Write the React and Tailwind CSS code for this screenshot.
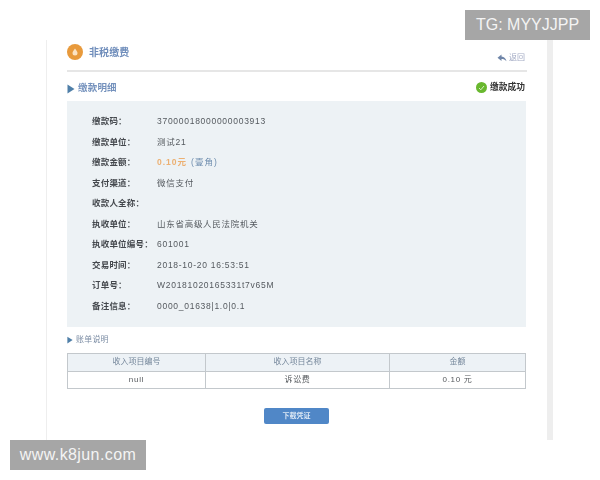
const rows = [
  ["缴款码：", "37000018000000003913"],
  ["缴款单位：", "测试21"],
  ["缴款金额：", null],
  ["支付渠道：", "微信支付"],
  ["收款人全称：", ""],
  ["执收单位：", "山东省高级人民法院机关"],
  ["执收单位编号：", "601001"],
  ["交易时间：", "2018-10-20 16:53:51"],
  ["订单号：", "W20181020165331t7v65M"],
  ["备注信息：", "0000_01638|1.0|0.1"],
];

function Arrow({ size = 8 }) {
  return (
    <svg width={size} height={size + 2} viewBox="0 0 8 10" className="shrink-0">
      <path d="M0.5 0.5 L7.5 5 L0.5 9.5 Z" fill="#4f7fa8" />
    </svg>
  );
}

export default function App() {
  return (
    <div
      className="relative w-[600px] h-[480px] bg-white pt-10 overflow-hidden"
      style={{ fontFamily: '"Liberation Sans", "Noto Sans CJK SC", sans-serif' }}
    >
      <div className="ml-[46px] w-[507px] h-[400px] border-l border-l-[#eeeeee] border-r-[6px] border-r-[#eeeeee] pl-5 blur-[0.45px]">
        <div className="w-[460px]">
          <div className="h-[31.5px] flex items-start justify-between border-b-2 border-b-[#e6e6e6]">
            <div className="flex items-center gap-[6px] h-6">
              <div className="w-4 h-4 rounded-full bg-[#e89a3c] flex items-center justify-center">
                <svg width="6" height="8" viewBox="0 0 6 8">
                  <path d="M3 0.5 C4.2 2.5 5.5 3.6 5.5 5 A2.5 2.5 0 0 1 0.5 5 C0.5 3.6 1.8 2.5 3 0.5 Z" fill="#fbe3c4" />
                </svg>
              </div>
              <span className="text-[10px] font-bold text-[#6f8dbb] tracking-[0.1px]">非税缴费</span>
            </div>
            <div className="flex items-center gap-[2px] mt-[12px] pr-[2px] text-[8px] text-[#a3abc4]">
              <svg width="10" height="8" viewBox="0 0 10 8">
                <path d="M4.5 0.5 L0.5 3.7 L4.5 7 L4.5 5 C6.5 5 8 5.6 9.5 7.2 C9 4.4 7.2 2.6 4.5 2.4 Z" fill="#6f85a8" />
              </svg>
              <span>返回</span>
            </div>
          </div>

          <div className="h-[29px] pt-[5px] flex items-center justify-between">
            <div className="flex items-center gap-[3px]">
              <Arrow />
              <span className="text-[9.5px] font-bold text-[#7592bd] tracking-[0.2px]">缴款明细</span>
            </div>
            <div className="flex items-center gap-[3px] -mt-[2px] pr-[2px]">
              <div className="w-[11px] h-[11px] rounded-full bg-[#69b82f] flex items-center justify-center">
                <svg width="7" height="6" viewBox="0 0 7 6">
                  <path d="M1 3 L2.8 4.8 L6 1" fill="none" stroke="#d9f0c8" strokeWidth="1" />
                </svg>
              </div>
              <span className="text-[8.75px] font-bold text-[#333333]">缴款成功</span>
            </div>
          </div>

          <div className="h-[226px] mr-[1px] bg-[#edf2f5] pl-[25px] pt-[11px] text-[8.5px]">
            {rows.map(([label, value]) => (
              <div key={label} className="h-[20.5px] flex items-center">
                <span className="w-[65px] shrink-0 font-bold text-[#44484d] tracking-[0.2px] whitespace-nowrap">{label}</span>
                {value === null ? (
                  <span className="tracking-[1px]">
                    <span className="font-bold text-[#ecb072]">0.10元</span>
                    <span className="text-[#6d8cad] ml-[4px]">(壹角)</span>
                  </span>
                ) : (
                  <span className="text-[#54595e] tracking-[0.72px] whitespace-nowrap">{value}</span>
                )}
              </div>
            ))}
          </div>

          <div className="h-[26px] flex items-center gap-[3px]">
            <Arrow size={6} />
            <span className="text-[8px] text-[#7d8ea5] tracking-[0.2px]">账单说明</span>
          </div>

          <div className="mr-[1px] border border-[#c3c8cc] text-[8px]">
            <div className="grid grid-cols-[138px_184px_1fr] h-[18px] bg-[#edf2f6] border-b border-b-[#c3c8cc] text-[#75879b]">
              <div className="flex items-center justify-center border-r border-r-[#c3c8cc]">收入项目编号</div>
              <div className="flex items-center justify-center border-r border-r-[#c3c8cc]">收入项目名称</div>
              <div className="flex items-center justify-center">金额</div>
            </div>
            <div className="grid grid-cols-[138px_184px_1fr] h-[16px] text-[#55595d] tracking-[0.7px]">
              <div className="flex items-center justify-center border-r border-r-[#c3c8cc]">null</div>
              <div className="flex items-center justify-center border-r border-r-[#c3c8cc]">诉讼费</div>
              <div className="flex items-center justify-center">0.10 元</div>
            </div>
          </div>

          <div className="flex justify-center mt-[19px] pr-[1px]">
            <button className="w-[65px] h-[16.5px] rounded-[2px] bg-[#5087c7] text-[7px] text-[#dbe7f4] font-bold flex items-center justify-center">
              下载凭证
            </button>
          </div>
        </div>
      </div>

      <div className="absolute left-[465px] top-[10px] w-[125px] h-[30px] bg-[#a6a6a6] text-[#f4f4f4] text-[16px] flex items-center justify-center whitespace-nowrap">
        TG: MYYJJPP
      </div>
      <div className="absolute left-[10px] top-[440px] w-[136px] h-[30px] bg-[#a6a6a6] text-[#f4f4f4] text-[16px] tracking-[0.4px] flex items-center justify-center whitespace-nowrap">
        www.k8jun.com
      </div>
    </div>
  );
}
